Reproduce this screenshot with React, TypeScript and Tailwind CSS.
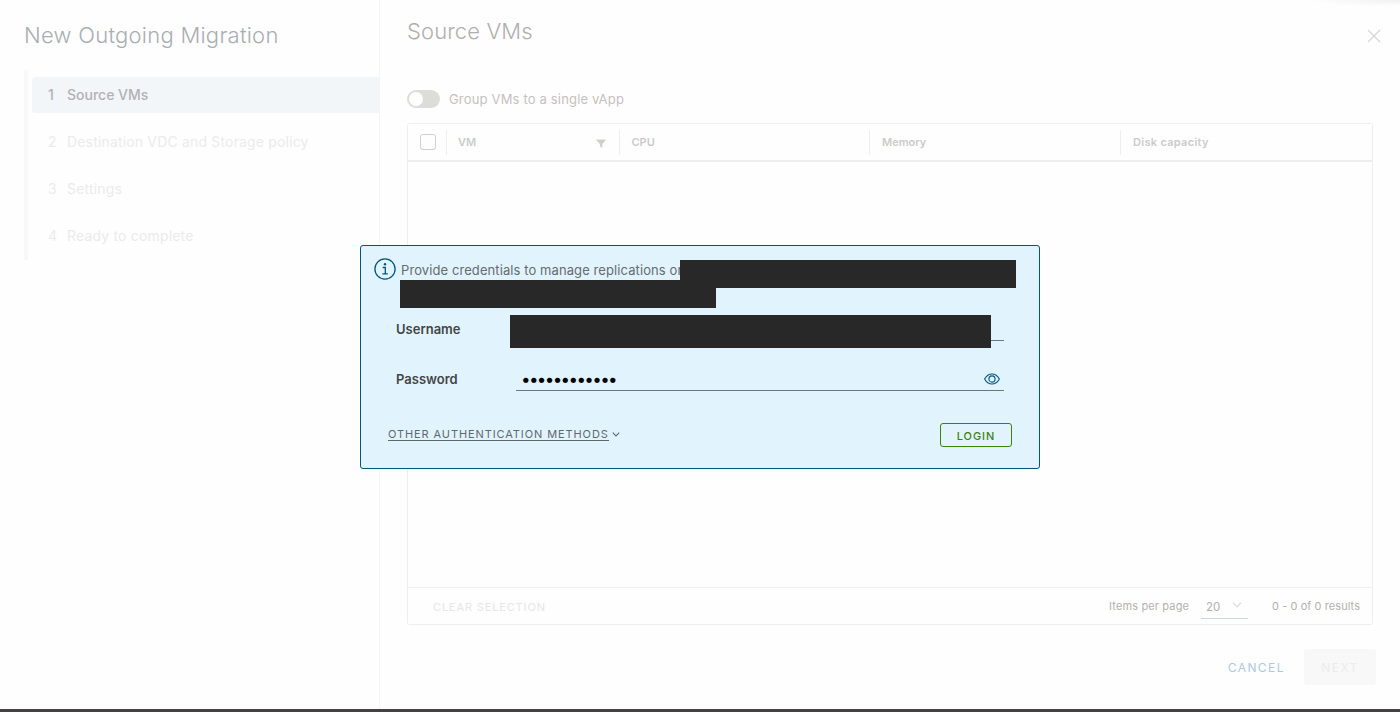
import { useState } from 'react'

const steps = ['Source VMs', 'Destination VDC and Storage policy', 'Settings', 'Ready to complete']

const CloseIcon = () => (
  <svg width="14" height="14" viewBox="0 0 14 14" fill="none" stroke="#d6d6d3" strokeWidth="1.2">
    <path d="M1 1 13 13M13 1 1 13" />
  </svg>
)

const FilterIcon = () => (
  <svg width="10" height="9" viewBox="0 0 10 9" fill="#cfcfcc">
    <path d="M0.5 0.5h9v1L6.3 5v4L3.9 7.6V5L0.5 1.5Z" />
  </svg>
)

const InfoIcon = () => (
  <svg width="22" height="22" viewBox="0 0 22 22" fill="none" stroke="#00567a" strokeWidth="1.3">
    <circle cx="11" cy="11" r="10.1" />
    <circle cx="11" cy="6.3" r="1.2" fill="#00567a" stroke="none" />
    <path d="M8.7 9.5h2.6v6.300M8.4 15.9h5.400" />
  </svg>
)

const EyeIcon = () => (
  <svg width="16" height="12" viewBox="0 0 16 12" fill="none" stroke="#00567a" strokeWidth="1.1">
    <path d="M0.6 6C2.4 2.8 5 1 8 1s5.6 1.8 7.4 5c-1.8 3.2-4.4 5-7.4 5S2.4 9.2.6 6Z" />
    <circle cx="8" cy="6" r="3.1" />
  </svg>
)

const Chevron = ({ className }: { className: string }) => (
  <svg className={className} viewBox="0 0 10 6" fill="none" stroke="currentColor" strokeWidth="1.3">
    <path d="M1 0.8 5 4.8 9 0.8" />
  </svg>
)

const Sidebar = () => (
  <aside className="flex w-[380px] shrink-0 flex-col border-r border-[#f5f5f5] bg-[#fefefe] pl-6">
    <h1 className="mt-5 h-[30px] whitespace-nowrap text-[22px] font-light leading-[30px] tracking-[0.26px] text-[#a9aeb2]">
      New Outgoing Migration
    </h1>
    <nav className="mt-5 flex h-[190px] flex-col gap-[11px] border-l-4 border-[#f8f8f8] pl-1 pt-[7px]">
      {steps.map((step, i) => (
        <div
          key={step}
          className={`flex h-9 shrink-0 items-center whitespace-nowrap rounded-l-[3px] pb-0.5 pl-4 text-[14px] ${
            i === 0
              ? 'bg-[#f3f6f9] font-medium text-[#b0b2b4]'
              : 'font-normal tracking-[0.17px] text-[#ebebeb]'
          }`}
        >
          <span className="w-[19px]">{i + 1}</span>
          <span>{step}</span>
        </div>
      ))}
    </nav>
  </aside>
)

const VmGrid = () => (
  <div className="flex h-[502px] w-[966px] flex-col rounded-[3px] border border-[#eeeeee] text-[11px]">
    <div className="flex h-[38px] shrink-0 items-center border-b-2 border-[#eeeeee] bg-[#fefefe] font-semibold text-[#cbcbcb]">
      <div className="flex h-[25px] w-[39px] items-center border-r border-[#eeeeee] pl-3">
        <span className="h-4 w-4 rounded-[3px] border border-[#cfcfcf]" />
      </div>
      <div className="flex h-[25px] w-[173px] items-center justify-between border-r border-[#eeeeee] pl-[11px] pr-[13px]">
        <span>VM</span>
        <span className="pt-0.5"><FilterIcon /></span>
      </div>
      <div className="flex h-[25px] w-[250px] items-center border-r border-[#eeeeee] pl-[11.5px]">CPU</div>
      <div className="flex h-[25px] w-[251px] items-center border-r border-[#eeeeee] pl-3">Memory</div>
      <div className="flex h-[25px] items-center pl-3 tracking-[0.3px]">Disk capacity</div>
    </div>
    <div className="grow" />
    <div className="flex h-[37px] shrink-0 items-center justify-between border-t border-[#eeeeee] bg-[#fefefe] pl-[25px] pr-3">
      <span className="pt-[3px] tracking-[0.86px] text-[#e6e6e6]">CLEAR SELECTION</span>
      <div className="flex items-center text-[#b4b1af]">
        <span className="pt-px tracking-[0.14px]">Items per page</span>
        <span className="ml-3 mt-[3px] flex h-[22px] w-[47px] items-center justify-between border-b border-[#cfd5d2] pl-[5px] pr-1.5">
          <span className="pt-px text-[11.5px]">20</span>
          <Chevron className="mb-1 h-1.5 w-2.5 text-[#dedede]" />
        </span>
        <span className="ml-6 pt-px tracking-[0.06px]">0 - 0 of 0 results</span>
      </div>
    </div>
  </div>
)

const LoginDialog = () => {
  const [password, setPassword] = useState('************')

  return (
    <div className="absolute left-[360px] top-[245px] h-[224px] w-[680px] rounded-[3px] border border-[#00567a] bg-[#e1f4fe]">
      <div className="flex pl-[13px] pt-3">
        <InfoIcon />
        <p className="ml-[5px] whitespace-nowrap pt-0.5 text-[13px] leading-[20px] tracking-[0.09px] text-[#666b6d]">
          Provide credentials to manage replications on
        </p>
      </div>
      {/* Redacted site name */}
      <div className="absolute left-[319px] top-[14px] h-7 w-[336px] bg-[#282828]" />
      <div className="absolute left-[39px] top-[34px] h-7 w-[316px] bg-[#282828]" />

      <div className="mt-10 flex h-[21px] pl-[35px]">
        <label className="-mt-px w-[120px] text-[13px] font-semibold leading-[20px] text-[#454545]">Username</label>
        <div className="h-full w-[488px] border-b border-[#6d777b]" />
      </div>
      <div className="absolute left-[149px] top-[69px] h-[33px] w-[481px] bg-[#282828]" />

      <div className="mt-[29px] flex h-[21px] pl-[35px]">
        <label className="-mt-px w-[120px] text-[13px] font-semibold leading-[20px] text-[#454545]">Password</label>
        <div className="flex h-full w-[488px] items-center justify-between border-b border-[#6d777b] pl-[5px] pr-1">
          <input
            type="password"
            value={password}
            onChange={(e) => setPassword(e.target.value)}
            className="h-5 w-60 bg-transparent text-[17px] tracking-[-1.65px] text-black outline-none"
          />
          <span className="-mt-0.5"><EyeIcon /></span>
        </div>
      </div>

      <div className="mt-8 flex h-6 items-start justify-between pl-[27px] pr-[27px]">
        <button className="mt-[5px] flex items-start text-[11px] text-[#61686b]">
          <span className="h-[13px] whitespace-nowrap border-b border-[#61686b] leading-[13px] tracking-[0.9px]">
            OTHER AUTHENTICATION METHODS
          </span>
          <Chevron className="ml-[3px] mt-1 h-[5px] w-2" />
        </button>
        <button className="h-6 w-[72px] rounded-[3px] border border-[#3c8500] pt-0.5 text-[11px] font-medium tracking-[0.9px] text-[#42810e]">
          LOGIN
        </button>
      </div>
    </div>
  )
}

export default function App() {
  const [grouped, setGrouped] = useState(false)

  return (
    <div className="relative flex h-[712px] w-[1400px] overflow-hidden border-b-[3px] border-[#444243] bg-[#fefefe] font-['Inter',sans-serif]">
      <Sidebar />
      <main className="flex w-[1020px] flex-col pl-[27px]">
        <div className="flex h-[89px] justify-between pr-[19px]">
          <h2 className="mt-4 whitespace-nowrap text-[22px] font-light leading-[30px] tracking-[0.1px] text-[#b1afae]">Source VMs</h2>
          <button className="mt-[29px] h-[14px]"><CloseIcon /></button>
        </div>
        <div className="flex h-[34px] items-start">
          <button
            onClick={() => setGrouped(!grouped)}
            className={`mt-px flex h-[18px] w-[33px] items-center rounded-full bg-[#dcdcd8] px-0.5 ${grouped ? 'justify-end' : ''}`}
          >
            <span className="h-[14px] w-[14px] rounded-full bg-white" />
          </button>
          <span className="ml-[9px] whitespace-nowrap text-[13px] leading-[20px] tracking-[0.17px] text-[#c6c1be]">
            Group VMs to a single vApp
          </span>
        </div>
        <VmGrid />
        <div className="mt-6 flex h-9 items-center justify-end pr-6 text-[12px]">
          <button className="pt-px tracking-[1.45px] text-[#adc9df]">CANCEL</button>
          <button className="ml-[19px] h-9 w-[72px] rounded-[3px] bg-[#f8f8f8] pt-px tracking-[1.4px] text-[#ececec]">NEXT</button>
        </div>
      </main>
      {/* Shadow of the page header behind the modal */}
      <div className="absolute right-0 top-0 h-2 w-[110px] bg-radial-[at_100%_0%] from-[#f1f1f1] to-transparent to-60%" />
      <LoginDialog />
    </div>
  )
}
